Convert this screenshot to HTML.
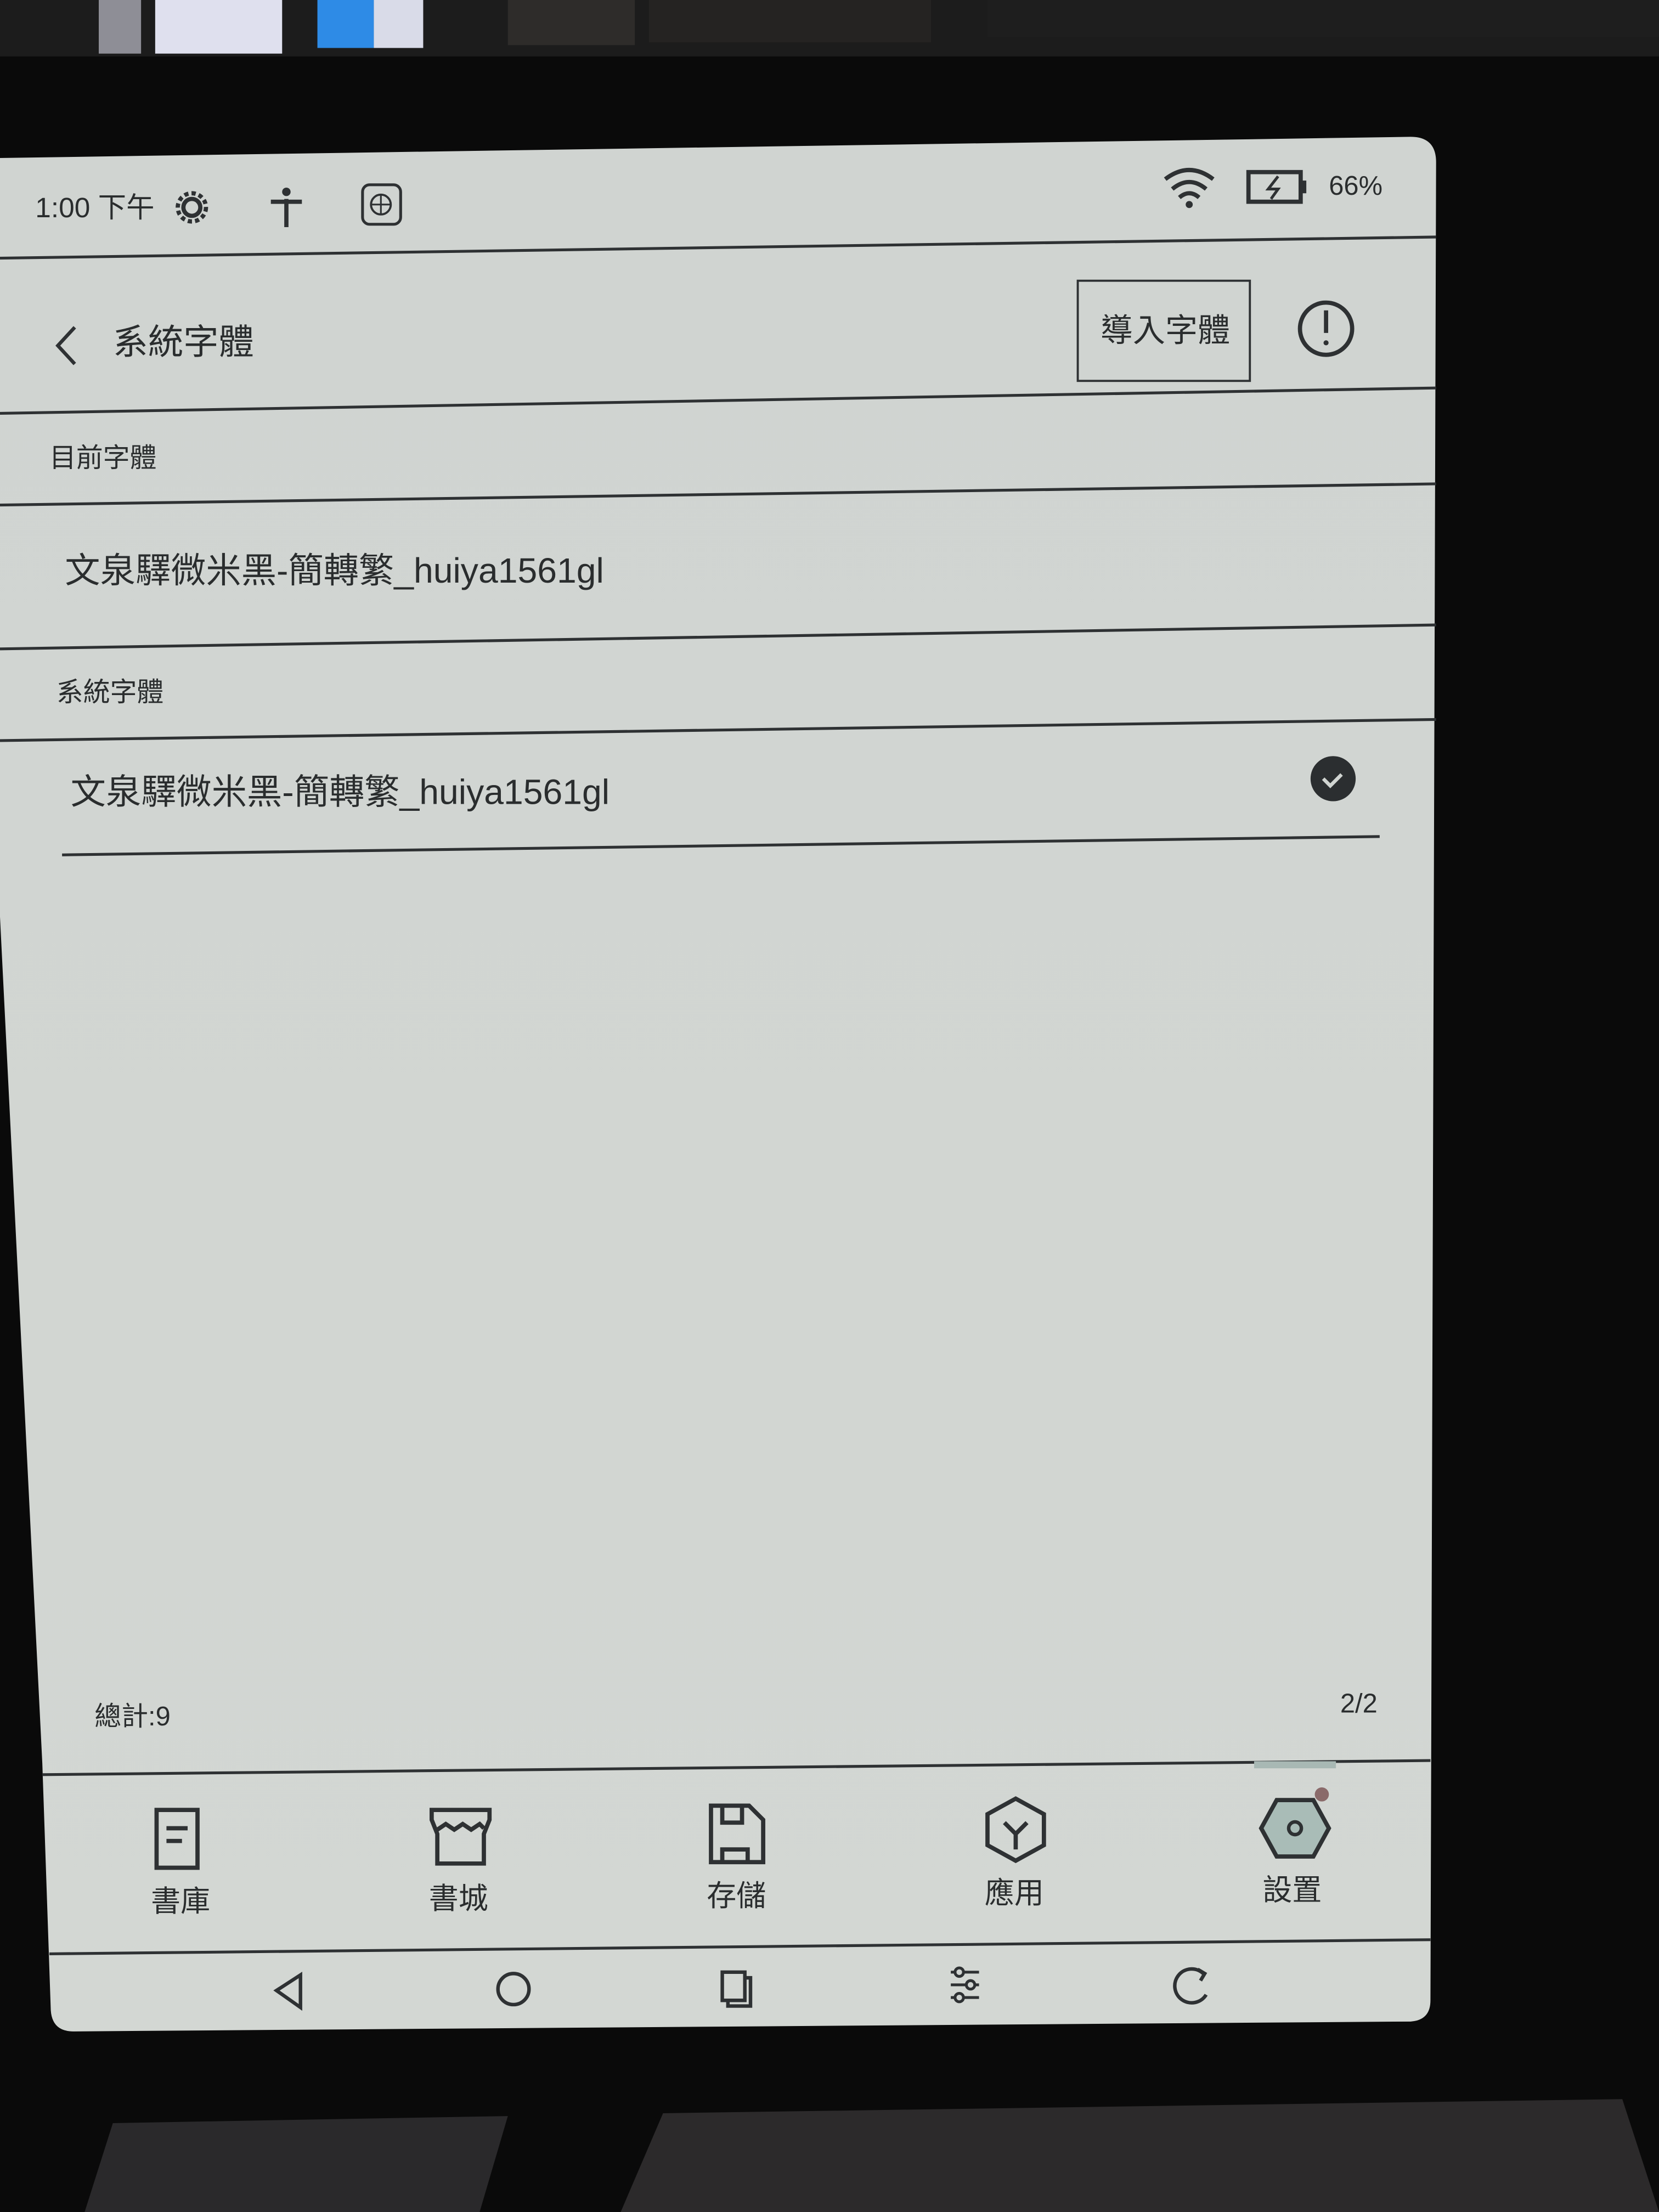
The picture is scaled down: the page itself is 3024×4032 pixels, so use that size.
<!DOCTYPE html>
<html><head><meta charset="utf-8"><style>
html,body{margin:0;padding:0;width:3024px;height:4032px;overflow:hidden;background:#0a0a0a}
#w{position:absolute;left:0;top:0;width:1176px;height:1568px;transform:scale(2.5714);transform-origin:0 0}
.t{position:absolute;font-family:"Liberation Sans","Noto Sans CJK TC",sans-serif;color:#2a2d2e;white-space:nowrap;line-height:1}
</style></head><body><div id="w">
<svg width="1176" height="1568" style="position:absolute;left:0;top:0">
<defs><linearGradient id="sc" x1="0" y1="0" x2="0" y2="1"><stop offset="0" stop-color="#d0d4d1"/><stop offset="1" stop-color="#d3d7d3"/></linearGradient></defs>
<rect x="0" y="0" width="1176" height="40" fill="#1c1c1c"/>
<rect x="70" y="0" width="30" height="38" fill="#8e8e96"/>
<rect x="110" y="0" width="90" height="38" fill="#dfe0ee"/>
<rect x="225" y="0" width="40" height="34" fill="#2e8be6"/>
<rect x="265" y="0" width="35" height="34" fill="#d9dbe8"/>
<rect x="360" y="0" width="90" height="32" fill="#2e2c2a"/>
<rect x="460" y="0" width="200" height="30" fill="#252322"/>
<rect x="700" y="0" width="476" height="26" fill="#1e1e1e"/>
<path d="M60 1568 L80 1505 L360 1500 L340 1568Z" fill="#2a292b"/>
<path d="M440 1568 L470 1498 L1150 1488 L1176 1568Z" fill="#2c2a2b"/>
<path d="M0 112 L1000 97 Q1018 97 1018 115 L1014 1418 Q1014 1432 1000 1433 L52 1440 Q37 1440 36 1425 L30 1250 L0 650Z" fill="url(#sc)"/>
<g stroke="#2e3133" stroke-width="2" fill="none">
<line x1="0" y1="183" x2="1018" y2="168"/>
<line x1="0" y1="293" x2="1018" y2="275"/>
<line x1="0" y1="358" x2="1018" y2="343"/>
<line x1="0" y1="460" x2="1018" y2="443"/>
<line x1="0" y1="525" x2="1018" y2="510"/>
<line x1="44" y1="606" x2="978" y2="593"/>
<line x1="30" y1="1258" x2="1014" y2="1248"/>
<line x1="35" y1="1385" x2="1014" y2="1375"/>
<rect x="764" y="199" width="122" height="71" stroke-width="1.5"/>
<circle cx="940" cy="233" r="18.5" stroke-width="3"/>
<line x1="940" y1="220" x2="940" y2="236" stroke-width="3"/>
<circle cx="940" cy="243" r="1.8" fill="#2e3133" stroke="none"/>
<path d="M53 232 L41 245 L53 258" stroke-width="2.5"/>
<circle cx="136" cy="147" r="6" stroke-width="3"/>
<circle cx="136" cy="147" r="10" stroke-width="3" stroke-dasharray="3 2.2"/>
<circle cx="203" cy="136" r="3" fill="#2e3133" stroke="none"/>
<path d="M192 143 h22 M203 141 v20" stroke-width="3"/>
<rect x="257" y="131" width="27" height="28" rx="5" stroke-width="2"/>
<circle cx="270" cy="145" r="7" stroke-width="1.5"/>
<path d="M263 145 h14 M270 138 v14" stroke-width="1.2"/>
<path d="M826 127 Q843 114 860 127 M831 134 Q843 124 855 134 M836 140 Q843 134 850 140" stroke-width="3"/>
<circle cx="843" cy="145" r="2.5" fill="#2e3133" stroke="none"/>
<rect x="885" y="122" width="37" height="21" stroke-width="3"/>
<rect x="922" y="128" width="4" height="9" fill="#2e3133" stroke="none"/>
<path d="M906 125 l-7 9 h7 l-5 7" stroke-width="2"/>
<path d="M111 1283 h29 v41 h-29z M118 1296 h15 M118 1305 h11" stroke-width="3"/>
<path d="M306 1283 v7 l4 10 v21 h33 v-21 l4 -10 v-7 z M310 1297 l6 -4 l6 4 l6 -4 l6 4 l6 -4 l3 3" stroke-width="3"/>
<path d="M504 1280 h27 l10 10 v30 h-37z M512 1280 v12 h14 v-12 M512 1320 v-9 h18 v9" stroke-width="3"/>
<path d="M720 1275 l20 11 v22 l-20 11 l-20 -11 v-22z M712 1292 l8 8 l8 -8 M720 1300 v11" stroke-width="3"/>
<path d="M905 1276 h26 l11 20 l-11 20 h-26 l-11 -20z" stroke-width="3" fill="#a9bcb7"/>
<circle cx="918" cy="1296" r="4.5" stroke-width="2.5"/>
<circle cx="937" cy="1272" r="5" fill="#8a6a6a" stroke="none"/>
<line x1="889" y1="1251" x2="947" y2="1251" stroke="#a8b8b4" stroke-width="5"/>
<path d="M213 1400 L196 1411 L213 1423Z" stroke-width="2.5"/>
<circle cx="364" cy="1410" r="11" stroke-width="2.5"/>
<path d="M512 1398 h16 v20 h-16z M528 1402 h4 v20 h-16 v-4" stroke-width="2.5"/>
<path d="M674 1398 h20 M674 1407 h20 M674 1416 h20" stroke-width="2"/>
<circle cx="680" cy="1398" r="3" fill="#d0d4d1" stroke-width="2"/>
<circle cx="688" cy="1407" r="3" fill="#d0d4d1" stroke-width="2"/>
<circle cx="680" cy="1416" r="3" fill="#d0d4d1" stroke-width="2"/>
<path d="M853 1399 A12 12 0 1 0 855 1414 M849 1396 l5 3 l-3 5" stroke-width="2.5"/>
</g>
<circle cx="945" cy="552" r="16" fill="#2b2e30"/>
<path d="M938 552 l5 5 l8 -8" stroke="#d0d4d1" stroke-width="2.5" fill="none"/>
</svg>
<div class="t" style="left:25px;top:138px;font-size:20px">1:00 下午</div>
<div class="t" style="left:942px;top:123px;font-size:19px">66%</div>
<div class="t" style="left:80px;top:231px;font-size:25px">系統字體</div>
<div class="t" style="left:780px;top:223px;font-size:23px">導入字體</div>
<div class="t" style="left:35px;top:316px;font-size:19px">目前字體</div>
<div class="t" style="left:46px;top:393px;font-size:25px">文泉驛微米黑-簡轉繁_huiya1561gl</div>
<div class="t" style="left:40px;top:482px;font-size:19px">系統字體</div>
<div class="t" style="left:50px;top:550px;font-size:25px">文泉驛微米黑-簡轉繁_huiya1561gl</div>
<div class="t" style="left:67px;top:1208px;font-size:19px">總計:9</div>
<div class="t" style="left:950px;top:1199px;font-size:19px">2/2</div>
<div class="t" style="left:107px;top:1338px;font-size:21px">書庫</div>
<div class="t" style="left:304px;top:1336px;font-size:21px">書城</div>
<div class="t" style="left:501px;top:1334px;font-size:21px">存儲</div>
<div class="t" style="left:698px;top:1332px;font-size:21px">應用</div>
<div class="t" style="left:895px;top:1330px;font-size:21px">設置</div>
</div></body></html>
